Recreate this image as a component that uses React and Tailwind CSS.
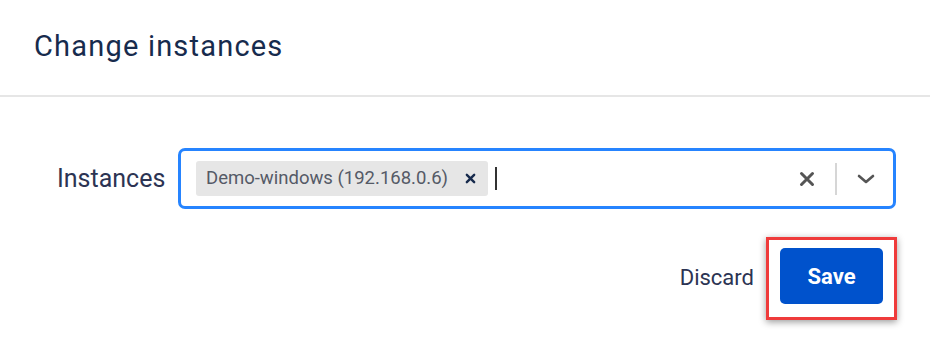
import { useState } from 'react';

function App() {
  const [chips] = useState(['Demo-windows (192.168.0.6)']);

  return (
    <div className="w-[930px] h-[341px] bg-white overflow-hidden font-['Roboto',sans-serif] text-[#172b4d]">
      {/* header */}
      <div className="h-[97px] flex items-center pl-[34px] border-b-2 border-[#e6e6e6]">
        <h1 className="text-[29px] leading-none font-normal tracking-[1.2px] -mt-[3px]">Change instances</h1>
      </div>

      {/* form row */}
      <div className="flex items-center pl-[57px] pt-[51px]">
        <label className="text-[25px] w-[121px] text-[#2c3453]">Instances</label>
        <div className="flex items-center w-[718px] h-[61px] border-[3px] border-[#2684ff] rounded-[7px] pl-[15px] pr-[18px]">
          <div className="flex-1 flex items-center gap-[7px]">
            {chips.map((c) => (
              <div key={c} className="flex items-center h-[35px] bg-[#e6e6e6] rounded-[3px] pl-[10px] pr-[12px]">
                <span className="text-[18.5px] text-[#555a66]">{c}</span>
                <svg className="ml-[17px]" width="11" height="11" viewBox="0 0 12 12">
                  <path d="M2 2L10 10M10 2L2 10" stroke="#172b4d" strokeWidth="2.6" strokeLinecap="round" />
                </svg>
              </div>
            ))}
            <span className="w-[2px] h-[23px] bg-[#333]" />
          </div>
          <svg width="16" height="16" viewBox="0 0 16 16" className="mr-[20px]">
            <path d="M2.5 2.5L13.5 13.5M13.5 2.5L2.5 13.5" stroke="#555" strokeWidth="3" strokeLinecap="round" />
          </svg>
          <span className="w-[2px] h-[32px] bg-[#d6d6d6]" />
          <svg width="18" height="10" viewBox="0 0 18 10" className="ml-[20px]">
            <path d="M2 2L9 8L16 2" stroke="#555" strokeWidth="2.6" fill="none" strokeLinecap="round" strokeLinejoin="round" />
          </svg>
        </div>
      </div>

      {/* actions */}
      <div className="flex items-center justify-end pr-[33px] pt-[28px]">
        <span className="text-[22px] text-[#2c3453] mr-[12px] -mt-[2px]">Discard</span>
        <div className="border-[3px] border-[#ef3b3b] pt-[8px] pb-[13px] px-[11px] shadow-[0_2px_7px_rgba(0,0,0,0.4)]">
          <button className="w-[103px] h-[56px] bg-[#0052cc] rounded-[5px] text-white text-[22px] font-bold">Save</button>
        </div>
      </div>
    </div>
  );
}

export default App;
